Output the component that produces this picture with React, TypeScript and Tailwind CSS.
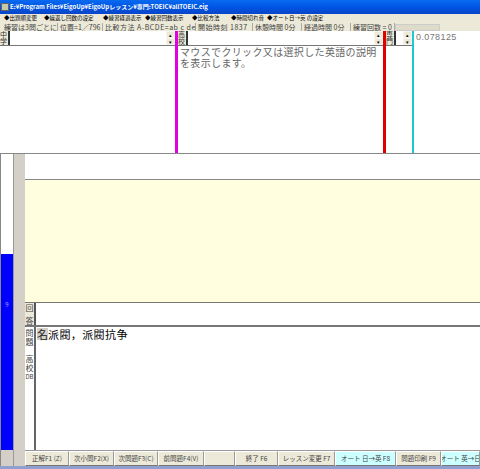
import React from 'react';

const jp = '[font-family:"Noto_Sans_CJK_JP","Liberation_Sans",sans-serif]';

const menuItems = [
  { label: '◆出題順変更', w: 'w-[40px]' },
  { label: '◆繰返し回数の設定', w: 'w-[59px]' },
  { label: '◆練習経過表示', w: 'w-[42px]' },
  { label: '◆練習回数表示', w: 'w-[47px]' },
  { label: '◆比較方法', w: 'w-[39px]' },
  { label: '◆時間切れ音', w: 'w-[36px]' },
  { label: '◆オート日→英 の設定', w: 'w-[60px]' },
];

const statusItems = [
  { label: '練習は3問ごとに', w: 'w-[56px]', track: '' },
  { label: '位置=1／796', w: 'w-[45px]', track: '' },
  { label: '比較方法 A-BCDE=ab c de', w: 'w-[93px]', track: 'tracking-[0.5px]' },
  { label: '開始時刻 1837', w: 'w-[57px]', track: 'tracking-[0.5px]' },
  { label: '休憩時間 0分', w: 'w-[49px]', track: '' },
  { label: '経過時間 0分', w: 'w-[49px]', track: '' },
  { label: '練習回数 = 0', w: 'w-[44px]', track: '' },
];

function Spin() {
  return (
    <div className="w-[9px] shrink-0 flex flex-col bg-[#ece9d8]">
      <div className="h-[7px] flex items-center justify-center text-[5px] leading-none text-black border border-[#f5f5f0]">▴</div>
      <div className="h-[7px] flex items-center justify-center text-[5px] leading-none text-black border border-[#f5f5f0]">▾</div>
    </div>
  );
}

function TopLabel({ top, bottom }: { top: string; bottom: string }) {
  return (
    <div className="w-[10px] shrink-0 flex flex-col bg-[#ece9d8] text-[7px] leading-[7px] text-[#333] border-r-2 border-[#333]">
      <span>{top}</span>
      <span>{bottom}</span>
    </div>
  );
}

function FKey({ label, w, cyan }: { label: string; w: string; cyan?: boolean }) {
  return (
    <div
      className={`${w} shrink-0 h-[15px] flex items-center justify-center overflow-hidden text-[6.5px] whitespace-nowrap text-[#444] border-t border-l border-white border-r border-r-[#999] border-b border-b-[#777] ${cyan ? 'bg-[#ccffff]' : 'bg-[#ece9d8]'}`}
    >
      {label}
    </div>
  );
}

export default function App() {
  return (
    <div className={`w-[480px] h-[469px] overflow-hidden flex flex-col bg-[#d4d0c8] ${jp}`}>
      {/* title bar */}
      <div className="h-[14px] shrink-0 flex items-center pl-[1px] bg-gradient-to-b from-[#0a6af0] via-[#0055e5] to-[#0a45c8]">
        <div className="w-[8px] h-[8px] bg-[#c8c8a8] border border-[#665]" />
        <span className="ml-[1px] text-[6px] leading-none font-bold text-white whitespace-nowrap">
          E:¥Program Files¥EigoUp¥EigoUpレッスン¥専門:TOEIC¥allTOEIC.eig
        </span>
      </div>

      {/* menu */}
      <div className="h-[9px] shrink-0 flex items-center pl-[4px] bg-[#ece9d8] text-[5.5px] leading-none text-black whitespace-nowrap">
        {menuItems.map((m) => (
          <div key={m.label} className={`${m.w} shrink-0`}>{m.label}</div>
        ))}
      </div>

      {/* status row */}
      <div className="h-[8px] shrink-0 flex items-center pl-[2px] bg-[#ece9d8] text-[7px] leading-[8px] text-[#444] whitespace-nowrap">
        {statusItems.map((s) => (
          <div key={s.label} className={`${s.w} ${s.track} shrink-0 h-[8px] pl-[2px] border-r border-[#aaa]`}>{s.label}</div>
        ))}
        <div className="w-[45px] h-[7px] bg-[#dedbc9] border border-[#ccc]" />
      </div>

      {/* upper panels */}
      <div className="h-[123px] shrink-0 flex bg-white border-b border-[#888]">
        <div className="w-[175px] shrink-0 flex flex-col">
          <div className="h-[15px] flex border-b-[1px] border-[#777]">
            <TopLabel top="中" bottom="学" />
            <div className="flex-1" />
            <Spin />
          </div>
        </div>
        <div className="w-[3px] shrink-0 bg-[#e000e0]" />
        <div className="w-[205px] shrink-0 flex flex-col">
          <div className="h-[15px] flex border-b-[1px] border-[#777]">
            <TopLabel top="高" bottom="校" />
            <div className="flex-1" />
            <Spin />
          </div>
          <p className="pl-[2px] pr-[2px] text-[10px] leading-[11px] text-[#666] tracking-[0.35px]">
            マウスでクリック又は選択した英語の説明を表示します。
          </p>
        </div>
        <div className="w-[3px] shrink-0 bg-[#e00000]" />
        <div className="w-[26px] shrink-0 flex flex-col">
          <div className="h-[15px] flex border-b-[1px] border-[#777]">
            <TopLabel top="専" bottom="門" />
            <div className="flex-1" />
            <Spin />
          </div>
        </div>
        <div className="w-[2px] shrink-0 bg-[#20c8c8]" />
        <div className="flex-1 pl-[2px] pt-[1px] text-[9px] leading-[11px] tracking-[0.4px] text-[#777] [font-family:'Liberation_Sans',sans-serif]">
          0.078125
        </div>
      </div>

      {/* lower area */}
      <div className="flex-1 min-h-0 flex">
        <div className="w-[13px] shrink-0 flex flex-col border-l border-[#888] bg-white">
          <div className="h-[100px] shrink-0 bg-white" />
          <div className="h-[196px] shrink-0 bg-[#0000ff] pt-[47px] text-center text-[6px] leading-[8px] text-[#aaaaff]">9</div>
          <div className="flex-1 bg-[#d4d0c8]" />
        </div>
        <div className="w-[12px] shrink-0 bg-[#d4d0c8] border-l border-[#999]" />
        <div className="flex-1 min-w-0 flex flex-col">
          <div className="h-[26px] shrink-0 bg-white border-b border-[#888]" />
          <div className="h-[122px] shrink-0 bg-[#ffffe0]" />
          <div className="h-[25px] shrink-0 flex bg-white border-t border-b-2 border-[#777]">
            <div className="w-[11px] shrink-0 flex flex-col items-center justify-center gap-[4px] bg-[#ece9d8] text-[8px] leading-[9px] text-[#444] border-r-2 border-[#555]">
              <span>回</span>
              <span>答</span>
            </div>
          </div>
          <div className="h-[123px] shrink-0 flex bg-white">
            <div className="w-[11px] shrink-0 flex flex-col items-center pt-[1px] bg-white text-[8px] leading-[9px] text-[#444] border-r-2 border-[#666]">
              <span>問</span>
              <span>題</span>
              <span className="mt-[8px]">高</span>
              <span>校</span>
              <span className="text-[6px]">DB</span>
            </div>
            <div className="pl-[1px] pt-[1px] flex items-start text-[11px] leading-[12px] text-black whitespace-nowrap">
              <span className="bg-[#d4d0c8] text-[#222]">名</span>
              <span className="tracking-[0.4px]">派閥，派閥抗争</span>
            </div>
          </div>
          <div className="h-[16px] shrink-0 flex border-t border-[#999] bg-[#ece9d8]">
            <FKey label="正解F1 (Z)" w="w-[44px]" />
            <FKey label="次小問F2(X)" w="w-[45px]" />
            <FKey label="次問題F3(C)" w="w-[44px]" />
            <FKey label="前問題F4(V)" w="w-[46px]" />
            <FKey label="" w="w-[31px]" />
            <FKey label="終了 F6" w="w-[43px]" />
            <FKey label="レッスン変更 F7" w="w-[57px]" />
            <FKey label="オート 日→英 F8" w="w-[61px]" cyan />
            <FKey label="問題印刷 F9" w="w-[45px]" />
            <FKey label="オート 英→日" w="w-[39px]" cyan />
          </div>
        </div>
      </div>
      <div className="h-[3px] shrink-0 bg-[#8f9fd0]" />
    </div>
  );
}
